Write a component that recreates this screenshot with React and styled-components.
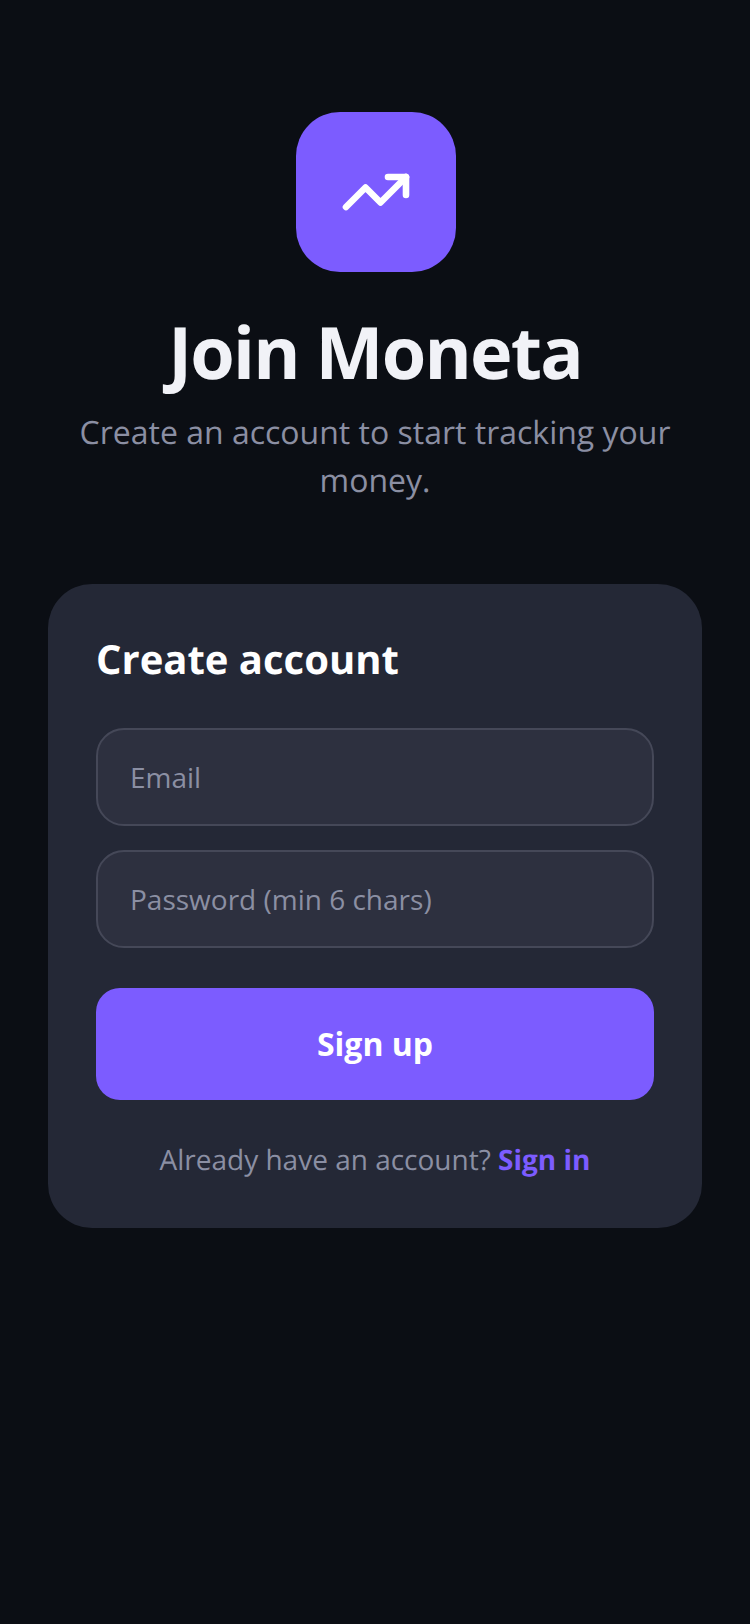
import React from 'react';
import styled, { createGlobalStyle } from 'styled-components';
import { TrendingUp } from 'lucide-react';

const GlobalStyle = createGlobalStyle`
	* {
		box-sizing: border-box;
	}
	html,
	body {
		margin: 0;
		padding: 0;
		background: #0b0e14;
		font-family: 'Open Sans', 'Noto Sans', sans-serif;
		text-rendering: geometricPrecision;
	}
`;

const Page = styled.div`
	width: 750px;
	min-height: 1624px;
	padding: 112px 48px 0;
	background: #0b0e14;
	display: flex;
	flex-direction: column;
	align-items: center;
`;
const Logo = styled.div`
	width: 160px;
	height: 160px;
	margin-left: 2px;
	border-radius: 44px;
	background: #7c5cff;
	color: #fff;
	display: flex;
	align-items: center;
	justify-content: center;
`;
const Title = styled.h1`
	margin: 36px 0 0;
	font-size: 72px;
	line-height: 88px;
	font-weight: 700;
	color: #f1f2f7;
	letter-spacing: -1.8px;
`;
const Subtitle = styled.p`
	margin: 13px 0 0;
	width: 620px;
	font-size: 32px;
	line-height: 48px;
	font-weight: 400;
	text-align: center;
	color: #8b8fa3;
`;
const Card = styled.div`
	width: 654px;
	margin-top: 79px;
	padding: 49px 48px;
	border-radius: 44px;
	background: #242836;
`;
const CardTitle = styled.h2`
	margin: 0 0 43px;
	font-size: 40px;
	line-height: 52px;
	font-weight: 700;
	color: #fff;
`;
const Fields = styled.div`
	display: flex;
	flex-direction: column;
	gap: 24px;
`;
const Input = styled.input`
	width: 100%;
	height: 98px;
	padding: 0 32px;
	border: 2px solid #454858;
	border-radius: 28px;
	background: #2d303f;
	color: #fff;
	font-family: inherit;
	font-size: 28px;
	outline: none;
	&::placeholder {
		color: #8b8fa3;
		opacity: 1;
	}
`;
const SubmitButton = styled.button`
	display: block;
	width: 100%;
	height: 112px;
	margin-top: 40px;
	padding: 0 0 2px;
	border: none;
	border-radius: 24px;
	background: #7c5cff;
	color: #fff;
	font-family: inherit;
	font-size: 32px;
	font-weight: 700;
`;
const Footer = styled.p`
	margin: 41px 0 0;
	font-size: 28px;
	line-height: 38px;
	text-align: center;
	color: #8b8fa3;
`;
const FooterLink = styled.a`
	color: #7c5cff;
	font-weight: 700;
`;

export default function App() {
	return (
		<>
			<GlobalStyle />
			<Page>
				<Logo>
					<TrendingUp size={72} strokeWidth={2.2} />
				</Logo>
				<Title>Join Moneta</Title>
				<Subtitle>Create an account to start tracking your money.</Subtitle>
				<Card>
					<CardTitle>Create account</CardTitle>
					<Fields>
						<Input type="email" placeholder="Email" />
						<Input type="password" placeholder="Password (min 6 chars)" />
					</Fields>
					<SubmitButton>Sign up</SubmitButton>
					<Footer>
						Already have an account? <FooterLink>Sign in</FooterLink>
					</Footer>
				</Card>
			</Page>
		</>
	);
}
